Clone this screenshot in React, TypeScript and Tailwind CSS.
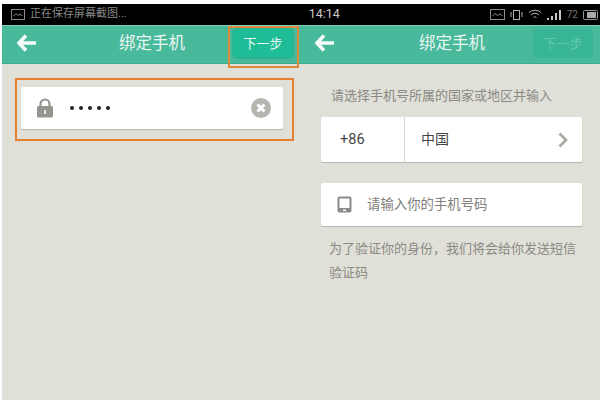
const cjk = "font-['Roboto','Noto_Sans_CJK_SC',sans-serif]";

function BackArrow() {
  return (
    <svg width="20" height="18" viewBox="0 0 20 18" className="text-[#f4fbf8]">
      <path d="M9 1.5 2 9l7 7.5M2.5 9H19" fill="none" stroke="currentColor" strokeWidth="3.6" />
    </svg>
  );
}

type HeaderProps = {
  titleClass: string;
  buttonClass: string;
  textClass: string;
};

function Header({ titleClass, buttonClass, textClass }: HeaderProps) {
  return (
    <div className="relative flex h-[39px] items-center justify-between border-t border-[#7fd0b8] bg-[#49b99b] pl-[15px] pr-[7px] shadow-[inset_0_-1px_0_#3fa98c]">
      <div className="-mt-[5px]">
        <BackArrow />
      </div>
      <span className={`absolute top-[6px] text-[16.5px] leading-[24px] text-[#e8f6f0] ${titleClass}`}>绑定手机</span>
      <div className={`mb-[3px] flex h-[29px] w-[60px] items-center justify-center rounded-[4px] text-[13px] ${buttonClass} ${textClass}`}>
        下一步
      </div>
    </div>
  );
}

function LeftPanel() {
  return (
    <div className="relative flex w-[298px] flex-col">
      <Header titleClass="left-[117px]" buttonClass="bg-[#1ebd97] shadow-[0_0_0_1px_#35ad8e]" textClass="text-[#e6f7f1]" />
      <div className="flex-1 bg-[#e0e0d8] pl-[19px] pt-[23px]">
        <div className="flex h-[42px] w-[262px] items-center rounded-[2px] bg-white pl-[15px] pr-[12px] shadow-[0_1px_1px_#b5b5ad]">
          <svg width="18" height="20" viewBox="0 0 18 20" className="text-[#959590]">
            <path d="M4.5 9V6a4.5 4.5 0 0 1 9 0v3" fill="none" stroke="currentColor" strokeWidth="2.2" />
            <rect x="1" y="8" width="16" height="11.5" rx="1.5" fill="currentColor" />
            <rect x="8" y="12" width="2" height="4" fill="#e6e6e0" />
          </svg>
          <span className="ml-[16px] flex gap-[5px]">
            {[0, 1, 2, 3, 4].map((i) => (
              <span key={i} className="size-[4px] rounded-full bg-[#222]" />
            ))}
          </span>
          <svg width="20" height="20" viewBox="0 0 20 20" className="ml-auto">
            <circle cx="10" cy="10" r="10" fill="#b5b5b0" />
            <path d="M6.5 6.5l7 7M13.5 6.5l-7 7" stroke="#fff" strokeWidth="3" />
          </svg>
        </div>
      </div>
      {/* 标注框 */}
      <div className="absolute left-[226px] top-[1px] h-[42px] w-[71px] border-2 border-[#dd8a3c]" />
      <div className="absolute left-[13px] top-[53px] h-[63px] w-[279px] border-2 border-[#e4802f]" />
    </div>
  );
}

function RightPanel() {
  return (
    <div className="flex flex-1 flex-col">
      <Header titleClass="left-[119px]" buttonClass="bg-[#37b595]" textClass="text-[#5fc9ad]" />
      <div className="flex-1 bg-[#e0e0d8] pl-[21px] pt-[22px] text-[13px]">
        <p className="pl-[10px] leading-[20px] text-[#8a8a84]">请选择手机号所属的国家或地区并输入</p>
        <div className="mt-[11px] flex h-[45px] w-[261px] items-center rounded-[2px] bg-white text-[#444] shadow-[0_1px_1px_#b5b5ad]">
          <div className="flex h-full w-[84px] items-center border-r border-[#d8d8d2] pl-[19px] text-[14.5px]">+86</div>
          <span className="ml-[16px] text-[14px]">中国</span>
          <svg width="10" height="16" viewBox="0 0 10 16" className="ml-auto mr-[14px]">
            <path d="M1.5 1.5 8 8l-6.5 6.5" fill="none" stroke="#a8a8a3" strokeWidth="2.6" />
          </svg>
        </div>
        <div className="mt-[21px] flex h-[43px] w-[261px] items-center rounded-[2px] bg-white pl-[16px] shadow-[0_1px_1px_#b5b5ad]">
          <svg width="15" height="17" viewBox="0 0 15 17">
            <rect x="0.5" y="0.5" width="14" height="16" rx="2" fill="#8b8b87" />
            <rect x="2.5" y="2.5" width="10" height="9.5" fill="#fff" />
            <rect x="6" y="13.5" width="3" height="1.5" fill="#fff" />
          </svg>
          <span className="ml-[15px] pt-[2px] text-[13.4px] text-[#80807c]">请输入你的手机号码</span>
        </div>
        <p className="mt-[11px] w-[256px] pl-[8px] text-[13px] leading-[24px] text-[#8a8a84]">
          为了验证你的身份，我们将会给你发送短信验证码
        </p>
      </div>
    </div>
  );
}

export default function App() {
  return (
    <div className={`flex h-[400px] w-[600px] flex-col overflow-hidden bg-white pl-[2px] pt-[4px] ${cjk}`}>
      {/* 状态栏 */}
      <div className="flex h-[21px] items-center bg-black text-[#8a8a8a]">
        <svg width="14" height="11" viewBox="0 0 14 11" className="ml-[9px]">
          <rect x="0.5" y="0.5" width="13" height="10" fill="none" stroke="currentColor" />
          <path d="M2.5 7 5 4.5l2 2 2-1.5 2 2" fill="none" stroke="currentColor" />
        </svg>
        <span className="ml-[5px] text-[11px]">正在保存屏幕截图...</span>
        <span className="ml-[182px] text-[12.5px] text-[#c8c8c8]">14:14</span>
        <div className="ml-auto mr-[2px] flex items-center gap-[5px]">
          <svg width="15" height="11" viewBox="0 0 15 11">
            <rect x="0.5" y="0.5" width="14" height="10" fill="none" stroke="currentColor" />
            <path d="M2.5 7 5 4.5l2.5 2 2.5-1.5 2.5 2" fill="none" stroke="currentColor" />
          </svg>
          <svg width="13" height="12" viewBox="0 0 13 12" fill="none" stroke="#b0b0b0">
            <rect x="3.5" y="1.5" width="6" height="9" />
            <path d="M1 3v5M12 3v5" />
          </svg>
          <svg width="14" height="11" viewBox="0 0 14 11" fill="none" stroke="#b0b0b0">
            <path d="M1 3.5a9 9 0 0 1 12 0M3 6a5.5 5.5 0 0 1 8 0M5.5 8.5a2 2 0 0 1 3 0" />
          </svg>
          <svg width="15" height="10" viewBox="0 0 15 10" fill="#c8c8c8">
            <rect x="0" y="8" width="2" height="2" />
            <rect x="4" y="6" width="2" height="4" />
            <rect x="8" y="3" width="2" height="7" />
            <rect x="12" y="0" width="2" height="10" />
          </svg>
          <span className="text-[10px] text-[#777]">72</span>
          <svg width="15" height="10" viewBox="0 0 15 10">
            <rect x="0.5" y="0.5" width="14" height="9" rx="1" fill="none" stroke="#999" />
            <rect x="4" y="2" width="9" height="6" fill="#aaa" />
          </svg>
        </div>
      </div>
      <div className="flex flex-1">
        <LeftPanel />
        <RightPanel />
      </div>
    </div>
  );
}
